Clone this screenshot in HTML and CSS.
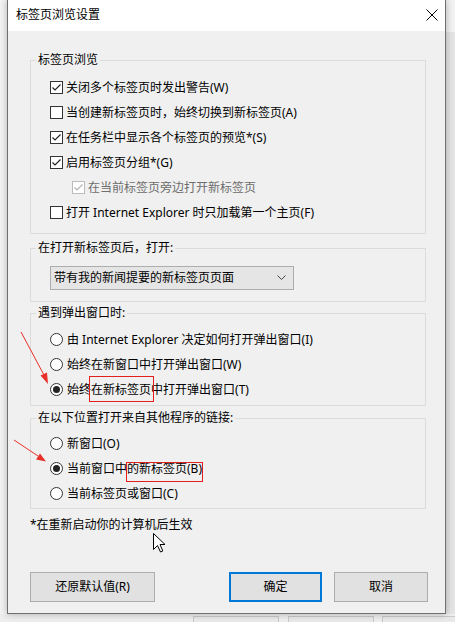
FILE: index.html
```html
<!DOCTYPE html>
<html lang="zh-CN">
<head>
<meta charset="utf-8">
<title>标签页浏览设置</title>
<link rel="stylesheet" href="styles.css">
</head>
<body>
<div class="screen">
  <div class="top">
    <div class="gutter-left"></div>
    <div class="window">
      <div class="titlebar">
        <span class="title">标签页浏览设置</span>
        <svg class="close" width="12" height="12" viewBox="0 0 12 12"><path d="M0.5 0.5 L11.5 11.5 M11.5 0.5 L0.5 11.5" stroke="#000" stroke-width="1" fill="none"/></svg>
      </div>
      <div class="client">
        <div class="group g1">
          <div class="legend">标签页浏览</div>
          <div class="rows">
            <div class="row"><span class="cb"><svg viewBox="0 0 11 11"><polyline points="1.5,5.5 4,8 9.5,2.5" /></svg></span><span class="label">关闭多个标签页时发出警告(W)</span></div>
            <div class="row"><span class="cb"></span><span class="label">当创建新标签页时，始终切换到新标签页(A)</span></div>
            <div class="row"><span class="cb"><svg viewBox="0 0 11 11"><polyline points="1.5,5.5 4,8 9.5,2.5" /></svg></span><span class="label">在任务栏中显示各个标签页的预览*(S)</span></div>
            <div class="row"><span class="cb"><svg viewBox="0 0 11 11"><polyline points="1.5,5.5 4,8 9.5,2.5" /></svg></span><span class="label">启用标签页分组*(G)</span></div>
            <div class="row indent disabled"><span class="cb"><svg viewBox="0 0 11 11"><polyline points="1.5,5.5 4,8 9.5,2.5" /></svg></span><span class="label">在当前标签页旁边打开新标签页</span></div>
            <div class="row"><span class="cb"></span><span class="label">打开 Internet Explorer 时只加载第一个主页(F)</span></div>
          </div>
        </div>

        <div class="group g2">
          <div class="legend">在打开新标签页后，打开:</div>
          <div class="select">
            <span>带有我的新闻提要的新标签页页面</span>
            <svg class="chev" width="9" height="6" viewBox="0 0 9 6"><polyline points="0.5,0.5 4.5,4.5 8.5,0.5" fill="none" stroke="#444" stroke-width="1"/></svg>
          </div>
        </div>

        <div class="group g3">
          <div class="legend">遇到弹出窗口时:</div>
          <div class="rows">
            <div class="row radio-row"><span class="rb"></span><span class="label">由 Internet Explorer 决定如何打开弹出窗口(I)</span></div>
            <div class="row radio-row"><span class="rb"></span><span class="label">始终在新窗口中打开弹出窗口(W)</span></div>
            <div class="row radio-row"><span class="rb on"></span><span class="label">始终<span class="hl hl1">在新标签页</span>中打开弹出窗口(T)</span></div>
          </div>
        </div>

        <div class="group g4">
          <div class="legend">在以下位置打开来自其他程序的链接:</div>
          <div class="rows">
            <div class="row radio-row"><span class="rb"></span><span class="label">新窗口(O)</span></div>
            <div class="row radio-row"><span class="rb on"></span><span class="label">当前窗口中<span class="hl hl2">的新标签页(B)</span></span></div>
            <div class="row radio-row"><span class="rb"></span><span class="label">当前标签页或窗口(C)</span></div>
          </div>
        </div>

        <div class="note">*在重新启动你的计算机后生效</div>

        <div class="buttons">
          <button class="btn btn-reset">还原默认值(R)</button>
          <div class="spacer"></div>
          <button class="btn btn-ok">确定</button>
          <button class="btn btn-cancel">取消</button>
        </div>
      </div>
    </div>
    <div class="gutter-right"><div class="gr-top"></div><div class="gr-bottom"></div></div>
  </div>
  <div class="bottom-strip">
    <div class="bg-btn b1"></div>
    <div class="bg-btn b2"></div>
    <div class="bg-btn b3"></div>
  </div>

  <svg class="overlay" width="455" height="622" viewBox="0 0 455 622">
    <line x1="21" y1="332" x2="44" y2="375" stroke="#e8302a" stroke-width="1"/>
    <polygon points="48,384 40.5,375.5 47,372.5" fill="#e8302a"/>
    <line x1="14" y1="440" x2="38" y2="456" stroke="#e8302a" stroke-width="1"/>
    <polygon points="46,461.5 36,459.5 40,453.5" fill="#e8302a"/>
    <path d="M153.5 533.5 V549.5 L157.5 545.5 L160.5 552 L162.8 551 L160 544.5 H165 Z" fill="#fff" stroke="#000" stroke-width="1" stroke-linejoin="miter"/>
  </svg>
</div>
</body>
</html>
```

FILE: styles.css
```css
* { box-sizing: border-box; }
html, body { margin: 0; padding: 0; }
body {
  width: 455px;
  height: 622px;
  overflow: hidden;
  background: #f0f0f0;
  font-family: "Noto Sans", "Noto Sans CJK SC", sans-serif;
  font-size: 12px;
  color: #000;
}
.screen {
  position: relative;
  width: 455px;
  height: 622px;
  display: flex;
  flex-direction: column;
}
.top { display: flex; }
.gutter-left { width: 7px; background: #f3f3f3; }
.gutter-right { width: 9px; display: flex; flex-direction: column; }
.gr-top { height: 32px; background: #f2f2f2; }
.gr-bottom { flex: 1; background: #e4e4e4; }

.window {
  width: 439px;
  border: 1px solid #6f6f6f;
  border-top: none;
  background: #f0f0f0;
  box-shadow: 0 0 7px rgba(0,0,0,0.28);
  position: relative;
  z-index: 1;
}
.titlebar {
  height: 31px;
  background: #fff;
  display: flex;
  align-items: center;
  padding-left: 8px;
  padding-right: 7px;
}
.title { flex: 1; line-height: 16px; margin-top: -1px; }
.close { display: block; margin-top: -1px; }

.client {
  padding: 29px 0 11px 22px;
}
.group {
  width: 396px;
  border: 1px solid #dcdcdc;
}
.legend {
  width: fit-content;
  margin: -9px 0 0 5px;
  padding: 0 2px;
  background: #f0f0f0;
  line-height: 16px;
  height: 16px;
  white-space: nowrap;
}
.g1 { padding-bottom: 8px; }
.g1 .rows { margin-top: 7px; }
.g2 { margin-top: 14px; padding: 0 0 11px 0; }
.g3 { margin-top: 11px; padding-bottom: 3px; }
.g3 .rows { margin-top: 6px; }
.g4 { margin-top: 12px; padding-bottom: 2px; }
.g4 .rows { margin-top: 5px; }

.row {
  height: 25px;
  display: flex;
  align-items: center;
  padding-left: 19px;
  line-height: 16px;
  white-space: nowrap;
}
.row.indent { padding-left: 41px; }
.cb {
  width: 13px;
  height: 13px;
  border: 1px solid #333;
  background: #fff;
  margin-right: 3px;
  flex: none;
  display: flex;
}
.cb svg { width: 11px; height: 11px; }
.cb polyline { fill: none; stroke: #222; stroke-width: 1.2; }
.disabled .cb { border-color: #bcbcbc; }
.disabled .cb polyline { stroke: #b5b5b5; }
.disabled .label { color: #6d6d6d; }

.rb {
  width: 13px;
  height: 13px;
  border: 1px solid #333;
  border-radius: 50%;
  background: #fff;
  margin-right: 4px;
  flex: none;
  display: flex;
  align-items: center;
  justify-content: center;
}
.rb.on::after {
  content: "";
  width: 7px;
  height: 7px;
  border-radius: 50%;
  background: #222;
}
.label { line-height: 16px; height: 16px; }
.hl {
  display: inline-block;
  position: relative;
  line-height: 16px;
  height: 16px;
}
.hl::after {
  content: "";
  position: absolute;
  border: 1px solid #e3201b;
}
.hl1::after { left: -2px; right: -3px; top: -6px; bottom: -4px; }
.hl2::after { left: -1px; right: -1px; top: 1px; bottom: -5px; }

.select {
  margin: 10px 0 0 19px;
  width: 244px;
  height: 24px;
  background: #e5e5e5;
  border: 1px solid #adadad;
  display: flex;
  align-items: center;
  padding-left: 3px;
  padding-right: 7px;
  line-height: 16px;
}
.select span { flex: 1; }
.chev { display: block; }

.note {
  margin-top: 8px;
  line-height: 16px;
  height: 16px;
}
.buttons {
  margin-top: 39px;
  display: flex;
  width: 398px;
}
.spacer { flex: 1; }
.btn {
  height: 30px;
  background: #e1e1e1;
  border: 1px solid #adadad;
  font-family: inherit;
  font-size: 12px;
  color: #000;
  padding: 0;
  line-height: 16px;
}
.btn-reset { width: 125px; }
.btn-ok { width: 93px; border: 2px solid #0078d7; }
.btn-cancel { width: 94px; margin-left: 12px; }

.bottom-strip {
  flex: 1;
  display: flex;
  padding-top: 2px;
  background: #eeeeee;
}
.bg-btn {
  height: 20px;
  background: #e9e9e9;
  border: 1px solid #c9c9c9;
}
.b1 { margin-left: 193px; width: 86px; }
.b2 { margin-left: 9px; width: 86px; }
.b3 { margin-left: 8px; flex: 1; border-right: none; }

.overlay {
  position: absolute;
  left: 0;
  top: 0;
  pointer-events: none;
  z-index: 5;
}
```
